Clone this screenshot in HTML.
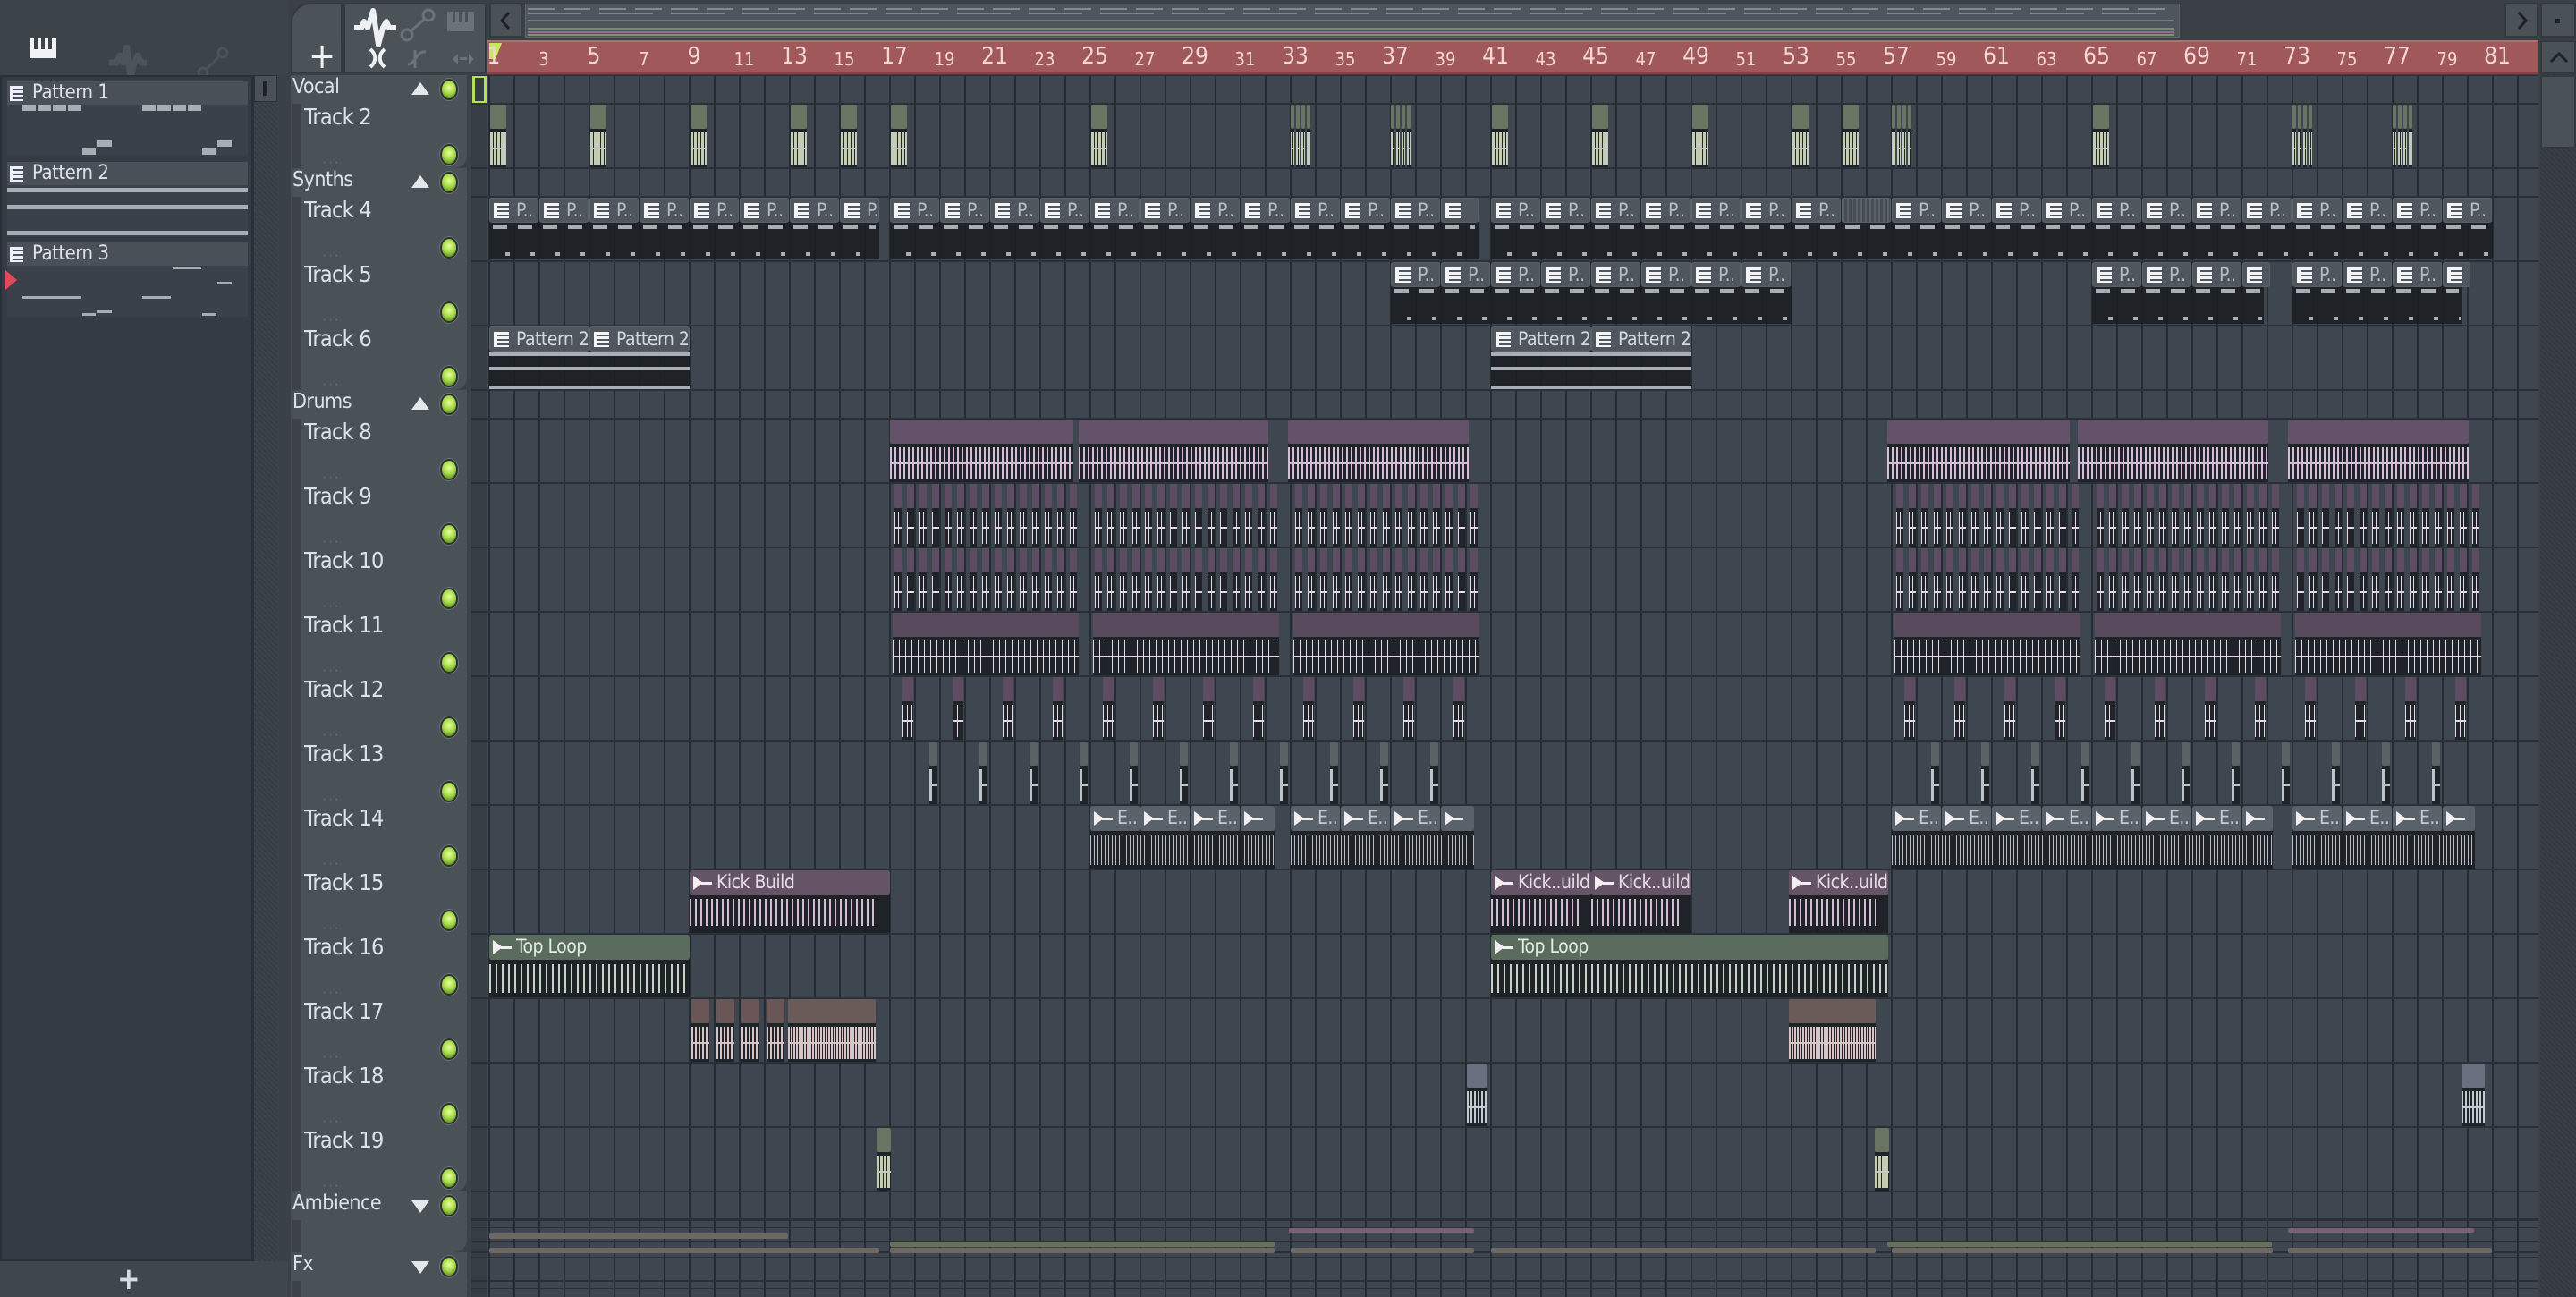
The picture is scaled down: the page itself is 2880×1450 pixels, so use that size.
<!DOCTYPE html>
<html><head><meta charset="utf-8">
<style>
*{margin:0;padding:0;box-sizing:border-box}
body{width:2880px;height:1450px;overflow:hidden;background:#3a4147;font-family:"Liberation Sans Narrow","DejaVu Sans Condensed","Liberation Sans",sans-serif;color:#d8dde2;position:relative}
div,b,i,span{position:absolute;display:block;font-weight:normal}
.t{font-weight:normal;white-space:nowrap}
.pl{left:8px;width:269px;background:#3a414b}
.ph{left:8px;width:269px;height:26px;background:#4a5058;font-size:22px;line-height:26px;padding-left:28px;color:#dde1e5;letter-spacing:-0.5px}
.pi{left:3px;top:5px;width:15px;height:17px;background:repeating-linear-gradient(#eef 0 3px,#4a5058 3px 5px);border-left:4px solid #eef}
.nb{height:7px;background:#a7adb2}
.hdr{left:325px;width:197px;background:#4a5157}
.grp{font-size:23px;left:327px;color:#dde2e6;letter-spacing:-0.5px}
.trk{font-size:25px;left:340px;color:#dde2e6;letter-spacing:-0.7px}
.led{width:20px;height:24px;border-radius:50%;background:radial-gradient(circle at 50% 40%,#e8ff9c 0,#a8dc4c 45%,#6a9a22 80%);border:2px solid #2c3236;box-shadow:0 0 0 1px #6d757a}
.dots{font-size:20px;color:#5d646a;left:360px;letter-spacing:1px}
.tri{width:0;height:0;border-left:10px solid transparent;border-right:10px solid transparent}
#grid{left:527px;top:84px;width:2311px;height:1366px;background:#3e4650;overflow:hidden}
.vl{top:0;bottom:0;width:2px;background:#262c33}
.hl{left:0;right:0;height:2px;background:#2a3037}
.pc{height:28px;width:55px;background:#4f565d;border-radius:3px;border:1px solid #5a6168;font-size:21px;line-height:26px;color:#b6bcc2;padding-left:29px;overflow:hidden;white-space:nowrap;letter-spacing:-0.5px}
.pc s,.ac s{position:absolute;left:4px;top:5px;width:17px;height:17px;background:repeating-linear-gradient(#f2f4f6 0 3px,transparent 3px 5px);border-left:4px solid #f2f4f6;text-decoration:none}
.body{background:rgba(24,28,32,.82)}
.ac{height:28px;border-radius:3px;font-size:21px;line-height:26px;padding-left:30px;overflow:hidden;white-space:nowrap;letter-spacing:-0.5px}
.ac s{background:none;border:none;width:22px;height:16px;top:6px}
.ac s:before{content:"";position:absolute;left:0;top:0;border-left:11px solid #f2eef2;border-top:8px solid transparent;border-bottom:8px solid transparent}
.ac s:after{content:"";position:absolute;left:9px;top:7px;width:12px;height:3px;background:#f2eef2}
.rn{top:50px;color:#f4d6d6;transform:translateX(-50%)}
</style></head><body>

<div style="left:0;top:0;width:322px;height:84px;background:#3c4349"></div>
<div style="left:33px;top:43px;width:30px;height:22px;background:#f0f2f4"></div>
<div style="left:38px;top:43px;width:4px;height:12px;background:#3c4349"></div>
<div style="left:46px;top:43px;width:4px;height:12px;background:#3c4349"></div>
<div style="left:54px;top:43px;width:4px;height:12px;background:#3c4349"></div>
<svg style="position:absolute;left:120px;top:50px" width="45" height="40"><path d="M2 20 L10 20 L14 12 L18 20 L22 2 L26 38 L30 20 L34 12 L38 20 L44 20" stroke="#4c545a" stroke-width="7" fill="none" stroke-linejoin="round"/></svg>
<svg style="position:absolute;left:220px;top:52px" width="36" height="36"><circle cx="7" cy="29" r="5" stroke="#4b5359" stroke-width="3" fill="none"/><circle cx="29" cy="7" r="5" stroke="#4b5359" stroke-width="3" fill="none"/><path d="M11 25 L25 11" stroke="#4b5359" stroke-width="3"/></svg>

<div style="left:0;top:84px;width:283px;height:1326px;background:#343b45;border:2px solid #2a3036"></div>
<div class="ph" style="top:91px"><i class="pi"></i>Pattern 1</div>
<div class="pl" style="top:117px;height:57px"></div>
<div class="nb" style="left:25px;top:117px;width:66px;background:repeating-linear-gradient(90deg,#a7adb2 0 15px,transparent 15px 17px)"></div>
<div class="nb" style="left:159px;top:117px;width:66px;background:repeating-linear-gradient(90deg,#a7adb2 0 15px,transparent 15px 17px)"></div>
<div class="nb" style="left:92px;top:166px;width:15px"></div><div class="nb" style="left:109px;top:157px;width:16px"></div>
<div class="nb" style="left:226px;top:166px;width:15px"></div><div class="nb" style="left:243px;top:157px;width:16px"></div>
<div class="ph" style="top:181px"><i class="pi"></i>Pattern 2</div>
<div class="pl" style="top:207px;height:58px"></div>
<div class="nb" style="left:8px;top:210px;width:269px;height:5px"></div>
<div class="nb" style="left:8px;top:229px;width:269px;height:5px"></div>
<div class="nb" style="left:8px;top:258px;width:269px;height:5px"></div>
<div class="ph" style="top:271px"><i class="pi"></i>Pattern 3</div>
<div class="pl" style="top:297px;height:57px"></div>
<div class="nb" style="left:193px;top:298px;width:32px;height:3px"></div>
<div class="nb" style="left:243px;top:315px;width:16px;height:3px"></div>
<div class="nb" style="left:25px;top:331px;width:66px;height:3px"></div>
<div class="nb" style="left:159px;top:331px;width:32px;height:3px"></div>
<div class="nb" style="left:92px;top:350px;width:15px;height:3px"></div><div class="nb" style="left:109px;top:347px;width:16px;height:3px"></div>
<div class="nb" style="left:226px;top:350px;width:16px;height:3px"></div>
<div style="left:6px;top:302px;width:0;height:0;border-left:13px solid #e04a5a;border-top:11px solid transparent;border-bottom:11px solid transparent"></div>
<div style="left:282px;top:84px;width:28px;height:1326px;background:repeating-linear-gradient(45deg,#363c43 0 2px,#3d434a 2px 4px);border-left:2px solid #2a3036"></div>
<div style="left:284px;top:84px;width:26px;height:30px;background:#4a5157;border:1px solid #2a3036"></div>
<div style="left:294px;top:91px;width:5px;height:16px;background:#1e2226"></div>
<div style="left:0;top:1410px;width:322px;height:40px;background:#3f464c"></div>
<div class="t" style="left:131px;top:1410px;font-size:34px;font-weight:bold;color:#d8dde2">+</div>

<div style="left:322px;top:0;width:2558px;height:45px;background:#3a4045"></div>
<div style="left:325px;top:3px;width:58px;height:79px;background:#4c5358;border:2px solid #33393d;border-radius:22px 2px 0 0"></div>
<div class="t" style="left:345px;top:40px;font-size:40px;color:#eef0f2">+</div>
<div style="left:384px;top:3px;width:160px;height:79px;background:#4c5358;border:2px solid #33393d"></div>
<svg style="position:absolute;left:392px;top:8px" width="150" height="72">
<path d="M4 23 L12 23 L15 16 L19 23 L25 4 L31 42 L36 23 L40 16 L43 23 L51 23" stroke="#eef0f2" stroke-width="6" fill="none" stroke-linejoin="round"/>
<circle cx="63" cy="31" r="6" stroke="#6b7378" stroke-width="3" fill="none"/><circle cx="87" cy="9" r="6" stroke="#6b7378" stroke-width="3" fill="none"/><path d="M67 27 L83 13" stroke="#6b7378" stroke-width="3"/>
<rect x="108" y="5" width="30" height="22" fill="#6b7378"/><rect x="114" y="5" width="3" height="12" fill="#4c5358"/><rect x="121" y="5" width="3" height="12" fill="#4c5358"/><rect x="128" y="5" width="3" height="12" fill="#4c5358"/>
<path d="M22 47 C28 52 30 60 22 67 M38 47 C32 52 30 60 38 67" stroke="#eef0f2" stroke-width="4" fill="none"/>
<path d="M72 68 L72 48 M64 64 C72 64 74 48 84 50" stroke="#6b7378" stroke-width="3" fill="none"/>
<path d="M114 58 L120 52 L120 64 Z M138 58 L132 52 L132 64 Z" fill="#6b7378"/><rect x="122" y="56" width="8" height="3" fill="#6b7378"/>
</svg>
<div style="left:547px;top:3px;width:37px;height:39px;background:#4a5157;border:2px solid #33393d"></div>
<svg style="position:absolute;left:556px;top:12px" width="20" height="22"><path d="M13 2 L5 11 L13 20" stroke="#1d2125" stroke-width="3" fill="none"/></svg>
<div style="left:587px;top:4px;width:1850px;height:38px;background:#4e565c;border:1px solid #5d656a"></div>
<div style="left:590px;top:9px;width:1840px;height:2px;background:repeating-linear-gradient(90deg,#848c93 0 30px,transparent 30px 40px)"></div>
<div style="left:590px;top:14px;width:1840px;height:2px;background:repeating-linear-gradient(90deg,#7d858b 0 60px,transparent 60px 80px)"></div>
<div style="left:590px;top:22px;width:1840px;height:1px;background:#717980"></div>
<div style="left:590px;top:31px;width:1840px;height:2px;background:#7a8a70"></div>
<div style="left:590px;top:35px;width:1840px;height:2px;background:#8a7090"></div>
<div style="left:590px;top:38px;width:1840px;height:2px;background:#908a70"></div>
<div style="left:2800px;top:3px;width:38px;height:39px;background:#4a5157;border:2px solid #33393d"></div>
<svg style="position:absolute;left:2810px;top:12px" width="20" height="22"><path d="M6 2 L14 11 L6 20" stroke="#1d2125" stroke-width="3" fill="none"/></svg>
<div style="left:2840px;top:3px;width:40px;height:39px;background:#4a5157;border:2px solid #33393d"></div>
<div style="left:2857px;top:21px;width:5px;height:5px;background:#1d2125"></div>
<div style="left:2840px;top:45px;width:40px;height:1405px;background:repeating-linear-gradient(45deg,#33393f 0 2px,#3a4046 2px 4px)"></div>
<div style="left:2840px;top:45px;width:40px;height:38px;background:#4a5157;border:2px solid #33393d"></div>
<svg style="position:absolute;left:2850px;top:56px" width="22" height="16"><path d="M2 13 L11 4 L20 13" stroke="#1d2125" stroke-width="3" fill="none"/></svg>
<div style="left:2840px;top:84px;width:40px;height:82px;background:#4a5157;border:2px solid #33393d"></div>

<div id="ruler" style="left:545px;top:45px;width:2293px;height:38px;background:#a0585b;border-top:2px solid #b86a6c;border-bottom:2px solid #7e4447"></div>
<div style="left:547px;top:48px;width:0;height:0;border-left:7px solid #c6e860;border-right:7px solid transparent;border-top:18px solid #c6e860"></div>

<div style="left:322px;top:84px;width:205px;height:1366px;background:#3a4147"></div>
<div class="hdr" style="top:84px;height:104px;border-radius:0 0 14px 0"></div>
<div class="hdr" style="top:188px;height:248px;border-radius:0 0 14px 0"></div>
<div class="hdr" style="top:436px;height:896px;border-radius:0 0 14px 0"></div>
<div class="hdr" style="top:1332px;height:68px;border-radius:0 0 14px 0"></div>
<div class="hdr" style="top:1400px;height:50px"></div>
<div style="left:327px;top:116px;width:10px;height:72px;background:#3c4248"></div>
<div style="left:327px;top:220px;width:10px;height:216px;background:#3c4248"></div>
<div style="left:327px;top:468px;width:10px;height:864px;background:#3c4248"></div>
<div style="left:327px;top:1364px;width:10px;height:36px;background:#3c4248"></div>
<div style="left:327px;top:1432px;width:10px;height:18px;background:#3c4248"></div>

<span class="t grp" style="top:84px">Vocal</span>
<span class="t grp" style="top:188px">Synths</span>
<span class="t grp" style="top:436px">Drums</span>
<span class="t grp" style="top:1332px">Ambience</span>
<span class="t grp" style="top:1400px">Fx</span>
<div class="tri" style="left:460px;top:92px;border-bottom:14px solid #e4e8ea"></div>
<div class="tri" style="left:460px;top:196px;border-bottom:14px solid #e4e8ea"></div>
<div class="tri" style="left:460px;top:444px;border-bottom:14px solid #e4e8ea"></div>
<div class="tri" style="left:460px;top:1342px;border-top:14px solid #e4e8ea"></div>
<div class="tri" style="left:460px;top:1410px;border-top:14px solid #e4e8ea"></div>
<div class="led" style="left:492px;top:88px"></div>
<div class="led" style="left:492px;top:192px"></div>
<div class="led" style="left:492px;top:440px"></div>
<div class="led" style="left:492px;top:1336px"></div>
<div class="led" style="left:492px;top:1404px"></div>

<span class="t trk" style="top:116px">Track 2</span>
<span class="t trk" style="top:220px">Track 4</span>
<span class="t trk" style="top:292px">Track 5</span>
<span class="t trk" style="top:364px">Track 6</span>
<span class="t trk" style="top:468px">Track 8</span>
<span class="t trk" style="top:540px">Track 9</span>
<span class="t trk" style="top:612px">Track 10</span>
<span class="t trk" style="top:684px">Track 11</span>
<span class="t trk" style="top:756px">Track 12</span>
<span class="t trk" style="top:828px">Track 13</span>
<span class="t trk" style="top:900px">Track 14</span>
<span class="t trk" style="top:972px">Track 15</span>
<span class="t trk" style="top:1044px">Track 16</span>
<span class="t trk" style="top:1116px">Track 17</span>
<span class="t trk" style="top:1188px">Track 18</span>
<span class="t trk" style="top:1260px">Track 19</span>

<div id="grid">
<div style="left:0;top:0;width:18px;height:1366px;background:#363d45"></div>
<div style="top:0;height:32px;border:3px solid #b4e05a;border-radius:2px;left:1px;width:16px"></div>
</div>

<div style="left:547px;top:248px;width:436px;height:42px" class="body"></div>
<div style="left:995px;top:248px;width:658px;height:42px" class="body"></div>
<div style="left:1667px;top:248px;width:1120px;height:42px" class="body"></div>
<b class="pc" style="left:547px;top:221px"><s></s>P..</b><b class="pc" style="left:603px;top:221px"><s></s>P..</b><b class="pc" style="left:659px;top:221px"><s></s>P..</b><b class="pc" style="left:715px;top:221px"><s></s>P..</b><b class="pc" style="left:771px;top:221px"><s></s>P..</b><b class="pc" style="left:827px;top:221px"><s></s>P..</b><b class="pc" style="left:883px;top:221px"><s></s>P..</b><b class="pc" style="left:939px;top:221px;width:44px"><s></s>P..</b>
<b class="pc" style="left:995px;top:221px"><s></s>P..</b><b class="pc" style="left:1051px;top:221px"><s></s>P..</b><b class="pc" style="left:1107px;top:221px"><s></s>P..</b><b class="pc" style="left:1163px;top:221px"><s></s>P..</b><b class="pc" style="left:1219px;top:221px"><s></s>P..</b><b class="pc" style="left:1275px;top:221px"><s></s>P..</b><b class="pc" style="left:1331px;top:221px"><s></s>P..</b><b class="pc" style="left:1387px;top:221px"><s></s>P..</b><b class="pc" style="left:1443px;top:221px"><s></s>P..</b><b class="pc" style="left:1499px;top:221px"><s></s>P..</b><b class="pc" style="left:1555px;top:221px"><s></s>P..</b><b class="pc" style="left:1611px;top:221px;width:42px"><s></s></b>
<b class="pc" style="left:1667px;top:221px"><s></s>P..</b><b class="pc" style="left:1723px;top:221px"><s></s>P..</b><b class="pc" style="left:1779px;top:221px"><s></s>P..</b><b class="pc" style="left:1835px;top:221px"><s></s>P..</b><b class="pc" style="left:1891px;top:221px"><s></s>P..</b><b class="pc" style="left:1947px;top:221px"><s></s>P..</b><b class="pc" style="left:2003px;top:221px"><s></s>P..</b>
<b class="pc" style="left:2059px;top:221px;background:repeating-linear-gradient(90deg,#5a6168 0 2px,#464d54 2px 5px)"></b>
<b class="pc" style="left:2115px;top:221px"><s></s>P..</b><b class="pc" style="left:2171px;top:221px"><s></s>P..</b><b class="pc" style="left:2227px;top:221px"><s></s>P..</b><b class="pc" style="left:2283px;top:221px"><s></s>P..</b><b class="pc" style="left:2339px;top:221px"><s></s>P..</b><b class="pc" style="left:2395px;top:221px"><s></s>P..</b><b class="pc" style="left:2451px;top:221px"><s></s>P..</b><b class="pc" style="left:2507px;top:221px"><s></s>P..</b><b class="pc" style="left:2563px;top:221px"><s></s>P..</b><b class="pc" style="left:2619px;top:221px"><s></s>P..</b><b class="pc" style="left:2675px;top:221px"><s></s>P..</b><b class="pc" style="left:2731px;top:221px"><s></s>P..</b>

<div style="left:1555px;top:320px;width:448px;height:42px" class="body"></div>
<div style="left:2339px;top:320px;width:192px;height:42px" class="body"></div>
<div style="left:2563px;top:320px;width:190px;height:42px" class="body"></div>
<b class="pc" style="left:1555px;top:293px"><s></s>P..</b><b class="pc" style="left:1611px;top:293px"><s></s>P..</b><b class="pc" style="left:1667px;top:293px"><s></s>P..</b><b class="pc" style="left:1723px;top:293px"><s></s>P..</b><b class="pc" style="left:1779px;top:293px"><s></s>P..</b><b class="pc" style="left:1835px;top:293px"><s></s>P..</b><b class="pc" style="left:1891px;top:293px"><s></s>P..</b><b class="pc" style="left:1947px;top:293px"><s></s>P..</b>
<b class="pc" style="left:2339px;top:293px"><s></s>P..</b><b class="pc" style="left:2395px;top:293px"><s></s>P..</b><b class="pc" style="left:2451px;top:293px"><s></s>P..</b><b class="pc" style="left:2507px;top:293px;width:24px"><s></s></b>
<b class="pc" style="left:2563px;top:293px"><s></s>P..</b><b class="pc" style="left:2619px;top:293px"><s></s>P..</b><b class="pc" style="left:2675px;top:293px"><s></s>P..</b><b class="pc" style="left:2731px;top:293px;width:22px"><s></s></b>

<div style="left:547px;top:392px;width:224px;height:42px" class="body"></div>
<div style="left:1667px;top:392px;width:224px;height:42px" class="body"></div>
<b class="pc" style="left:547px;top:365px;width:112px;color:#d4d9de"><s></s>Pattern 2</b><b class="pc" style="left:659px;top:365px;width:112px;color:#d4d9de"><s></s>Pattern 2</b>
<b class="pc" style="left:1667px;top:365px;width:112px;color:#d4d9de"><s></s>Pattern 2</b><b class="pc" style="left:1779px;top:365px;width:112px;color:#d4d9de"><s></s>Pattern 2</b>
<div style="left:547px;top:394px;width:224px;height:4px;background:#a8aeb3"></div><div style="left:547px;top:410px;width:224px;height:4px;background:#a8aeb3"></div><div style="left:547px;top:431px;width:224px;height:4px;background:#a8aeb3"></div>
<div style="left:1667px;top:394px;width:224px;height:4px;background:#a8aeb3"></div><div style="left:1667px;top:410px;width:224px;height:4px;background:#a8aeb3"></div><div style="left:1667px;top:431px;width:224px;height:4px;background:#a8aeb3"></div>

<div style="left:1219px;top:929px;width:206px;height:42px" class="body"></div>
<div style="left:1443px;top:929px;width:205px;height:42px" class="body"></div>
<div style="left:2115px;top:929px;width:426px;height:42px" class="body"></div>
<div style="left:2563px;top:929px;width:204px;height:42px" class="body"></div>
<div class="w14" style="left:1219px;width:206px"></div><div class="w14" style="left:1443px;width:205px"></div><div class="w14" style="left:2115px;width:426px"></div><div class="w14" style="left:2563px;width:204px"></div>
<b class="ac" style="left:1219px;top:901px;width:55px;background:#59626a;color:#c4cace"><s></s>E..</b><b class="ac" style="left:1275px;top:901px;width:55px;background:#59626a;color:#c4cace"><s></s>E..</b><b class="ac" style="left:1331px;top:901px;width:55px;background:#59626a;color:#c4cace"><s></s>E..</b><b class="ac" style="left:1387px;top:901px;width:38px;background:#59626a"><s></s></b>
<b class="ac" style="left:1443px;top:901px;width:55px;background:#59626a;color:#c4cace"><s></s>E..</b><b class="ac" style="left:1499px;top:901px;width:55px;background:#59626a;color:#c4cace"><s></s>E..</b><b class="ac" style="left:1555px;top:901px;width:55px;background:#59626a;color:#c4cace"><s></s>E..</b><b class="ac" style="left:1611px;top:901px;width:37px;background:#59626a"><s></s></b>
<b class="ac" style="left:2115px;top:901px;width:55px;background:#59626a;color:#c4cace"><s></s>E..</b><b class="ac" style="left:2171px;top:901px;width:55px;background:#59626a;color:#c4cace"><s></s>E..</b><b class="ac" style="left:2227px;top:901px;width:55px;background:#59626a;color:#c4cace"><s></s>E..</b><b class="ac" style="left:2283px;top:901px;width:55px;background:#59626a;color:#c4cace"><s></s>E..</b><b class="ac" style="left:2339px;top:901px;width:55px;background:#59626a;color:#c4cace"><s></s>E..</b><b class="ac" style="left:2395px;top:901px;width:55px;background:#59626a;color:#c4cace"><s></s>E..</b><b class="ac" style="left:2451px;top:901px;width:55px;background:#59626a;color:#c4cace"><s></s>E..</b><b class="ac" style="left:2507px;top:901px;width:34px;background:#59626a"><s></s></b>
<b class="ac" style="left:2563px;top:901px;width:55px;background:#59626a;color:#c4cace"><s></s>E..</b><b class="ac" style="left:2619px;top:901px;width:55px;background:#59626a;color:#c4cace"><s></s>E..</b><b class="ac" style="left:2675px;top:901px;width:55px;background:#59626a;color:#c4cace"><s></s>E..</b><b class="ac" style="left:2731px;top:901px;width:36px;background:#59626a"><s></s></b>

<div style="left:771px;top:1001px;width:224px;height:42px" class="body"></div>
<div style="left:1667px;top:1001px;width:224px;height:42px" class="body"></div>
<div style="left:2000px;top:1001px;width:111px;height:42px" class="body"></div>
<div class="wk" style="left:771px;width:208px"></div><div class="wk" style="left:1667px;width:100px"></div><div class="wk" style="left:1779px;width:100px"></div><div class="wk" style="left:2000px;width:97px"></div>
<b class="ac" style="left:771px;top:973px;width:224px;background:#655366;color:#e6dce6"><s></s>Kick Build</b>
<b class="ac" style="left:1667px;top:973px;width:112px;background:#655366;color:#e6dce6"><s></s>Kick..uild</b><b class="ac" style="left:1779px;top:973px;width:112px;background:#655366;color:#e6dce6"><s></s>Kick..uild</b>
<b class="ac" style="left:2000px;top:973px;width:111px;background:#655366;color:#e6dce6"><s></s>Kick..uild</b>

<div style="left:547px;top:1073px;width:224px;height:42px" class="body"></div>
<div style="left:1667px;top:1073px;width:444px;height:42px" class="body"></div>
<div class="wt" style="left:547px;width:224px"></div><div class="wt" style="left:1667px;width:444px"></div>
<b class="ac" style="left:547px;top:1045px;width:224px;background:#5a6c5e;color:#e2ebe4"><s></s>Top Loop</b>
<b class="ac" style="left:1667px;top:1045px;width:444px;background:#5a6c5e;color:#e2ebe4"><s></s>Top Loop</b>

<div style="left:527px;top:1362px;width:2311px;height:1px;background:#2a3037"></div>
<div style="left:527px;top:1372px;width:2311px;height:1px;background:#2a3037"></div>
<div style="left:527px;top:1387px;width:2311px;height:1px;background:#2a3037"></div>
<div style="left:527px;top:1405px;width:2311px;height:1px;background:#2a3037"></div>
<div style="left:527px;top:1440px;width:2311px;height:1px;background:#2a3037"></div>
<div style="left:547px;top:1379px;width:334px;height:6px;background:#6f6761;border-radius:2px"></div>
<div style="left:1441px;top:1373px;width:207px;height:5px;background:#7a6070;border-radius:2px"></div>
<div style="left:2558px;top:1373px;width:208px;height:5px;background:#7a6070;border-radius:2px"></div>
<div style="left:995px;top:1388px;width:430px;height:6px;background:#68705e;border-radius:2px"></div>
<div style="left:2110px;top:1388px;width:430px;height:6px;background:#68705e;border-radius:2px"></div>

<script>
var X=function(b){return 547+(b-1)*28};
function el(html){document.body.insertAdjacentHTML('beforeend',html)}
var g=document.getElementById('grid'),h='';
for(var b=1;b<=83;b++){h+='<div class="vl" style="left:'+(X(b)-527-1)+'px"></div>'}
var rows=[84,116,188,220,292,364,436,468,540,612,684,756,828,900,972,1044,1116,1188,1260,1332,1364,1400,1432];
rows.forEach(function(y){h+='<div class="hl" style="top:'+(y-84-1)+'px"></div>'});
g.insertAdjacentHTML('beforeend',h);
h='';
for(var b=1;b<=81;b+=2){var big=(b%4==1);h+='<span class="t rn" style="left:'+(X(b)+5)+'px;font-size:'+(big?26:20)+'px;top:'+(big?48:54)+'px">'+b+'</span>'}
el(h);
h='';
[116,220,292,364,468,540,612,684,756,828,900,972,1044,1116,1188,1260].forEach(function(y){h+='<div class="led" style="left:492px;top:'+(y+45)+'px"></div><span class="t dots" style="top:'+(y+48)+'px">...</span>'});
el(h);
function clip(x,y,w,hc,wc,dens,lw){var s='<div style="left:'+x+'px;top:'+(y+1)+'px;width:'+w+'px;height:27px;background:'+hc+';border-radius:2px"></div>';
s+='<div style="left:'+x+'px;top:'+(y+28)+'px;width:'+w+'px;height:43px;background:#1f2428"></div>';
s+='<div style="left:'+x+'px;top:'+(y+32)+'px;width:'+w+'px;height:36px;background:repeating-linear-gradient(90deg,'+wc+' 0 '+lw+'px,transparent '+lw+'px '+dens+'px)"></div>';
s+='<div style="left:'+x+'px;top:'+(y+49)+'px;width:'+w+'px;height:2px;background:'+wc+'"></div>';return s}
h='';
[1,5,9,13,15,17,25,41,45,49,53,55,65].forEach(function(b){h+=clip(X(b)+1,116,18,'#6a7462','#c4ccb8',4,3)});
[33,37,57,73,77].forEach(function(b){for(var k=0;k<4;k++)h+=clip(X(b)+k*6,116,4,'#6a7462','#c4ccb8',3,2)});
[[995,205],[1206,212],[1440,202],[2110,204],[2323,213],[2558,202]].forEach(function(a){h+=clip(a[0],468,a[1],'#64526a','#d6bcd8',5,2)});
[540,612].forEach(function(y){[17,25,33,57,65,73].forEach(function(b){for(var k=0;k<15;k++)h+=clip(X(b)+5+k*14,y,8,'#5e4d62','#e4d8e8',4,1)})});
[17,25,33,57,65,73].forEach(function(b){h+=clip(X(b)+3,684,208,'#5a4a5e','#e4d8e8',7,1)});
[17,57].forEach(function(s){for(var k=0;k<12;k++)h+=clip(X(s+2*k)+14,756,12,'#5e4d62','#e4d8e8',5,1)});
[18,58].forEach(function(s){for(var k=0;k<11;k++)h+=clip(X(s+2*k)+16,828,9,'#5a6468','#b8c6cc',9,3)});
[773,801,829,857].forEach(function(x){h+=clip(x,1116,20,'#6a5656','#d8c4c4',4,2)});
h+=clip(881,1116,98,'#6a5a58','#d8c4c4',3,2);
h+=clip(2000,1116,97,'#6a5a58','#d8c4c4',3,2);
h+=clip(1640,1188,22,'#6a7080','#c0ccd0',4,2);h+=clip(2752,1188,26,'#6a7080','#c0ccd0',4,2);
h+=clip(980,1260,16,'#6a7462','#c4ccb8',4,3);h+=clip(2096,1260,16,'#6a7462','#c4ccb8',4,3);
[[547,436],[995,430],[1443,205],[1667,430],[2115,426],[2558,228]].forEach(function(a){h+='<div style="left:'+a[0]+'px;top:1395px;width:'+a[1]+'px;height:6px;background:#6f6761;border-radius:2px"></div>'});
el(h);
h='';
document.querySelectorAll('.w14').forEach(function(d){d.style.cssText+=';top:933px;height:34px;background:repeating-linear-gradient(90deg,#b8bec4 0 1px,transparent 1px 4px)'});
document.querySelectorAll('.wk').forEach(function(d){d.style.cssText+=';top:1005px;height:30px;background:repeating-linear-gradient(90deg,#d4bcd6 0 2px,transparent 2px 6px)'});
document.querySelectorAll('.wt').forEach(function(d){d.style.cssText+=';top:1078px;height:32px;background:repeating-linear-gradient(90deg,#c4d4c4 0 2px,transparent 2px 7px)'});
[[547,436,248],[995,658,248],[1667,1120,248],[1555,448,320],[2339,192,320],[2563,190,320]].forEach(function(a){
h+='<div style="left:'+(a[0]+4)+'px;top:'+(a[2]+3)+'px;width:'+(a[1]-8)+'px;height:5px;background:repeating-linear-gradient(90deg,#a8aeb3 0 16px,transparent 16px 28px)"></div>';
h+='<div style="left:'+(a[0]+18)+'px;top:'+(a[2]+34)+'px;width:'+(a[1]-20)+'px;height:4px;background:repeating-linear-gradient(90deg,#a8aeb3 0 5px,transparent 5px 28px)"></div>'});
el(h);
</script>
</body></html>
